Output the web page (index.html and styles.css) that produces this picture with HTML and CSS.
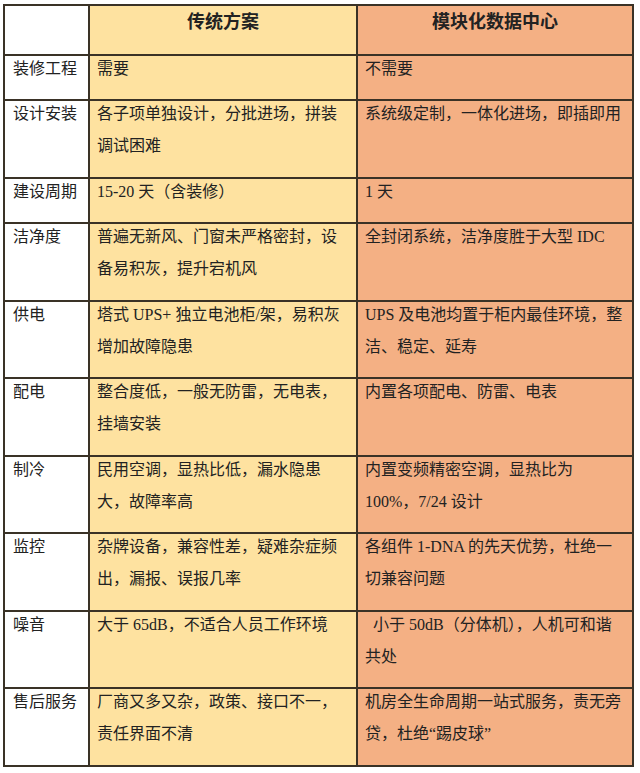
FILE: index.html
```html
<!DOCTYPE html>
<html lang="zh-CN">
<head>
<meta charset="utf-8">
<title>传统方案 vs 模块化数据中心</title>
<link rel="stylesheet" href="styles.css">
</head>
<body>
<table class="cmp">
  <colgroup>
    <col class="c1">
    <col class="c2">
    <col class="c3">
  </colgroup>
  <thead>
    <tr>
      <th class="w"></th>
      <th class="y"><div class="t">传统方案</div></th>
      <th class="o"><div class="t">模块化数据中心</div></th>
    </tr>
  </thead>
  <tbody>
    <tr>
      <td class="w"><div class="t">装修工程</div></td>
      <td class="y"><div class="t">需要</div></td>
      <td class="o"><div class="t">不需要</div></td>
    </tr>
    <tr>
      <td class="w"><div class="t">设计安装</div></td>
      <td class="y"><div class="t">各子项单独设计，分批进场，拼装调试困难</div></td>
      <td class="o"><div class="t">系统级定制，一体化进场，即插即用</div></td>
    </tr>
    <tr>
      <td class="w"><div class="t">建设周期</div></td>
      <td class="y"><div class="t">15-20 天（含装修）</div></td>
      <td class="o"><div class="t">1 天</div></td>
    </tr>
    <tr>
      <td class="w"><div class="t">洁净度</div></td>
      <td class="y"><div class="t">普遍无新风、门窗未严格密封，设备易积灰，提升宕机风</div></td>
      <td class="o"><div class="t">全封闭系统，洁净度胜于大型 IDC</div></td>
    </tr>
    <tr>
      <td class="w"><div class="t">供电</div></td>
      <td class="y"><div class="t">塔式 UPS+ 独立电池柜/架，易积灰增加故障隐患</div></td>
      <td class="o"><div class="t">UPS 及电池均置于柜内最佳环境，整洁、稳定、延寿</div></td>
    </tr>
    <tr>
      <td class="w"><div class="t">配电</div></td>
      <td class="y"><div class="t">整合度低，一般无防雷，无电表，挂墙安装</div></td>
      <td class="o"><div class="t">内置各项配电、防雷、电表</div></td>
    </tr>
    <tr>
      <td class="w"><div class="t">制冷</div></td>
      <td class="y"><div class="t">民用空调，显热比低，漏水隐患大，故障率高</div></td>
      <td class="o"><div class="t">内置变频精密空调，显热比为<br>100%，7/24 设计</div></td>
    </tr>
    <tr>
      <td class="w"><div class="t">监控</div></td>
      <td class="y"><div class="t">杂牌设备，兼容性差，疑难杂症频出，漏报、误报几率</div></td>
      <td class="o"><div class="t">各组件 1-DNA 的先天优势，杜绝一切兼容问题</div></td>
    </tr>
    <tr>
      <td class="w"><div class="t">噪音</div></td>
      <td class="y"><div class="t">大于 65dB，不适合人员工作环境</div></td>
      <td class="o"><div class="t">&nbsp;&nbsp;小于 50dB（分体机），人机可和谐共处</div></td>
    </tr>
    <tr>
      <td class="w"><div class="t">售后服务</div></td>
      <td class="y"><div class="t">厂商又多又杂，政策、接口不一，责任界面不清</div></td>
      <td class="o"><div class="t">机房全生命周期一站式服务，责无旁贷，杜绝“踢皮球”</div></td>
    </tr>
  </tbody>
</table>
</body>
</html>
```
FILE: styles.css
```css
html, body {
  margin: 0;
  padding: 0;
  background: #ffffff;
}

body {
  font-family: "Liberation Serif", "Noto Sans CJK SC", serif;
  font-size: 16px;
  color: #222222;
}

.cmp {
  border-collapse: collapse;
  table-layout: fixed;
  width: 631px;
  margin: 4px 0 0 3px;
}

.c1 { width: 85px; }
.c2 { width: 268px; }
.c3 { width: 276px; }

.cmp th,
.cmp td {
  border: 2px solid #3a3226;
  vertical-align: top;
  text-align: left;
  line-height: 32px;
  padding: 0 7px 14.5px 7px;
}

.cmp td.w { padding-left: 8px; }
.cmp td.y { padding-right: 9px; }
.cmp td.o { padding-right: 7px; }

.cmp th {
  font-family: "Noto Sans CJK SC", sans-serif;
  font-size: 18px;
  font-weight: bold;
  text-align: center;
  padding-bottom: 17.5px;
}

.t {
  margin-top: -3px;
}

.cmp th .t {
  margin-top: -2px;
}

.w { background: #ffffff; }
.y { background: #fee2a0; }
.o { background: #f4b084; }
```
